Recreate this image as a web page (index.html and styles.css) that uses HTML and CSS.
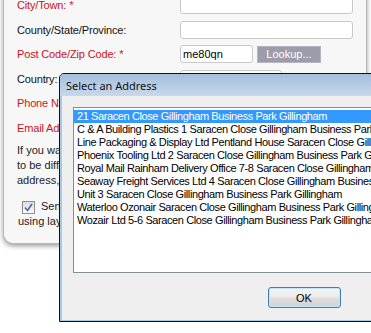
FILE: index.html
```html
<!DOCTYPE html>
<html lang="en">
  <head>
    <meta charset="UTF-8" />
    <title>Address</title>
    <link rel="stylesheet" href="styles.css">
  </head>
  <body>
    <div class="page">
      <form class="card">
        <div class="row">
          <label class="req">City/Town: *</label>
          <input class="field wide" type="text">
        </div>
        <div class="row">
          <label>County/State/Province:</label>
          <input class="field wide" type="text">
        </div>
        <div class="row">
          <label class="req">Post Code/Zip Code: *</label>
          <input class="field short" type="text" value="me80qn">
          <button type="button" class="lookup">Lookup...</button>
        </div>
        <div class="row">
          <label>Country:</label>
          <div class="field country"></div>
        </div>
        <div class="row">
          <label class="req">Phone Number: *</label>
          <input class="field wide" type="text">
        </div>
        <div class="row">
          <label class="req">Email Address: *</label>
          <input class="field wide" type="text">
        </div>
        <p class="note">If you want your delivery address<br>to be different from your billing<br>address, please tick below.</p>
        <p class="check-line"><span class="check"><svg width="9" height="9" viewBox="0 0 9 9"><path d="M1 4.5 L3.5 7.5 L8 1" fill="none" stroke="#4c6a9e" stroke-width="1.6"/></svg></span>Send to a different address<br>using layout below.</p>
      </form>

      <div class="dialog">
        <div class="titlebar">Select an Address</div>
        <div class="client">
          <ul class="listbox">
            <li class="selected">21 Saracen Close Gillingham Business Park Gillingham</li>
            <li>C &amp; A Building Plastics 1 Saracen Close Gillingham Business Park Gillingham</li>
            <li>Line Packaging &amp; Display Ltd Pentland House Saracen Close Gillingham Business Park</li>
            <li>Phoenix Tooling Ltd 2 Saracen Close Gillingham Business Park Gillingham</li>
            <li>Royal Mail Rainham Delivery Office 7-8 Saracen Close Gillingham Business Park</li>
            <li>Seaway Freight Services Ltd 4 Saracen Close Gillingham Business Park</li>
            <li>Unit 3 Saracen Close Gillingham Business Park Gillingham</li>
            <li>Waterloo Ozonair Saracen Close Gillingham Business Park Gillingham</li>
            <li>Wozair Ltd 5-6 Saracen Close Gillingham Business Park Gillingham</li>
          </ul>
          <div class="buttons">
            <button type="button" class="ok">OK</button>
          </div>
        </div>
      </div>
    </div>
  </body>
</html>
```

FILE: styles.css
```css
body {
  margin: 0;
  background: #fff;
  font-family: "Liberation Sans", Arial, sans-serif;
  overflow: hidden;
}
.page {
  position: relative;
  height: 333px;
  overflow: hidden;
}
.card {
  margin: -8px 4px 0 3px;
  padding: 0.7px 0 14px 13px;
  background: #f7f7f7;
  border: 1px solid #b9b9b9;
  border-top: none;
  border-radius: 0 0 10px 10px;
  box-shadow: 0 2px 5px rgba(0, 0, 0, 0.4);
}
.row {
  display: flex;
  align-items: center;
  height: 24.6px;
}
.row label {
  width: 163px;
  font-size: 11px;
  letter-spacing: -0.15px;
  color: #111;
}
.row label.req {
  color: #cc1420;
}
.field {
  box-sizing: border-box;
  height: 18px;
  border: 1px solid #c9c9c9;
  border-radius: 3px;
  background: #fff;
  font-family: "Liberation Sans", Arial, sans-serif;
  font-size: 11px;
  padding: 0 2px;
  color: #000;
}
.wide {
  width: 173px;
}
.short {
  width: 73px;
}
.country {
  width: 102px;
}
.lookup {
  box-sizing: border-box;
  height: 17px;
  width: 64px;
  margin-left: 4px;
  padding: 0;
  border: 1px solid #b4b4c2;
  background: #9c9cab;
  color: #fff;
  font-family: "Liberation Sans", Arial, sans-serif;
  font-size: 11px;
}
.note {
  margin: 3px 0 0 0;
  font-size: 11px;
  line-height: 15px;
  color: #222;
}
.check-line {
  margin: 11px 0 0 1px;
  font-size: 11px;
  line-height: 15px;
  color: #222;
}
.check {
  display: inline-flex;
  align-items: center;
  justify-content: center;
  box-sizing: border-box;
  width: 13px;
  height: 13px;
  margin: 0 6px 0 4px;
  vertical-align: -2px;
  border: 1px solid #8e8f8f;
  background: linear-gradient(#dcdcdc, #fafafa);
}

/* popup */
.dialog {
  position: absolute;
  left: 59px;
  top: 73px;
  width: 490px;
  height: 249px;
  box-sizing: border-box;
  display: flex;
  flex-direction: column;
  border: 1px solid #111;
  border-radius: 5px 5px 0 0;
  background: #a9c8e6;
  overflow: hidden;
}
.titlebar {
  height: 22px;
  line-height: 23px;
  padding-left: 6px;
  font-family: "Noto Sans", sans-serif;
  font-size: 11px;
  color: #111;
  background: linear-gradient(#a5bddc, #b8cce5 55%, #c9d8ea);
}
.client {
  flex: 1;
  margin: 0 2px 1px 2px;
  padding: 11px 11px 0 11px;
  background: #efefef;
  display: flex;
  flex-direction: column;
}
.listbox {
  margin: 0;
  padding: 2px 0 0 0;
  list-style: none;
  height: 166px;
  box-sizing: border-box;
  border: 1px solid #828f93;
  background: #fff;
  overflow: hidden;
}
.listbox li {
  height: 13px;
  line-height: 13px;
  padding-left: 3px;
  font-size: 11px;
  letter-spacing: -0.4px;
  white-space: nowrap;
  color: #000;
}
.listbox li.selected {
  background: #3399ff;
  color: #fff;
}
.buttons {
  display: flex;
  justify-content: center;
  margin-top: 14px;
}
.ok {
  width: 73px;
  height: 21px;
  padding: 0;
  border: 1px solid #3c7fb1;
  border-radius: 3px;
  background: linear-gradient(#f4f4f4, #ececec 48%, #dedede 52%, #d2d2d2);
  box-shadow: inset 0 0 0 1px #c4e5f6;
  font-family: "Liberation Sans", Arial, sans-serif;
  font-size: 11px;
  color: #000;
}
```
